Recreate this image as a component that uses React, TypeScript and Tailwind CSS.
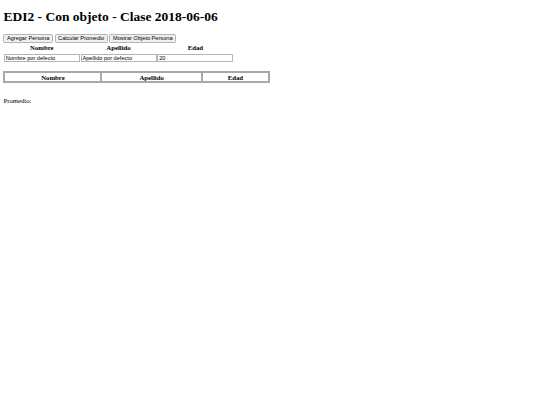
// Page drawn at its native 1280px width, then scaled down to the 540px window
const heads = ['Nombre', 'Apellido', 'Edad'];
const defaults = ['Nombre por defecto', 'Apellido por defecto', '20'];
const buttons = ['Agregar Persona', 'Calcular Promedio', 'Mostrar Objeto Persona'];

const control = "font-['Liberation_Sans',Arial,sans-serif] text-[13.33px] leading-[normal] text-black";

export default function App() {
  return (
    <div className="[zoom:0.421875] w-[1280px] bg-white px-2 pb-2 font-['Liberation_Serif',serif] text-[16px] leading-[normal] text-black">
      <h1 className="my-[21.44px] text-[32px] font-bold leading-[normal]">EDI2 - Con objeto - Clase 2018-06-06</h1>

      {/* Buttons sit inline on a text line, like plain markup */}
      <div>
        {buttons.map(b => (
          <span key={b}>
            <button className={`inline-block rounded-[3px] border border-[#b4b4b4] bg-[#efefef] px-[6px] py-[1px] align-baseline ${control}`}>
              {b}
            </button>{' '}
          </span>
        ))}
      </div>

      {/* Entry table */}
      <table className="border-separate border-spacing-[2px]">
        <thead>
          <tr>
            {heads.map(h => (
              <th key={h} className="px-[1px] pt-[3px] pb-[1px] text-center font-bold">{h}</th>
            ))}
          </tr>
        </thead>
        <tbody>
          <tr>
            {defaults.map(v => (
              <td key={v} className="px-[1px] py-[5px]">
                <input
                  defaultValue={v}
                  className={`block h-[20px] w-[180px] rounded-[2px] border border-[#b4b4b4] bg-white px-[2px] py-[1px] ${control}`}
                />
              </td>
            ))}
          </tr>
        </tbody>
      </table>
      <br />

      {/* People table */}
      <table className="w-1/2 border-separate border-spacing-[2px] border border-[#a8a8a8]">
        <thead>
          <tr>
            {heads.map(h => (
              <th key={h} className="border border-[#a8a8a8] p-[1px] text-center font-bold">{h}</th>
            ))}
          </tr>
        </thead>
        <tbody></tbody>
      </table>
      <br />

      <p className="my-4">Promedio: </p>
    </div>
  );
}
